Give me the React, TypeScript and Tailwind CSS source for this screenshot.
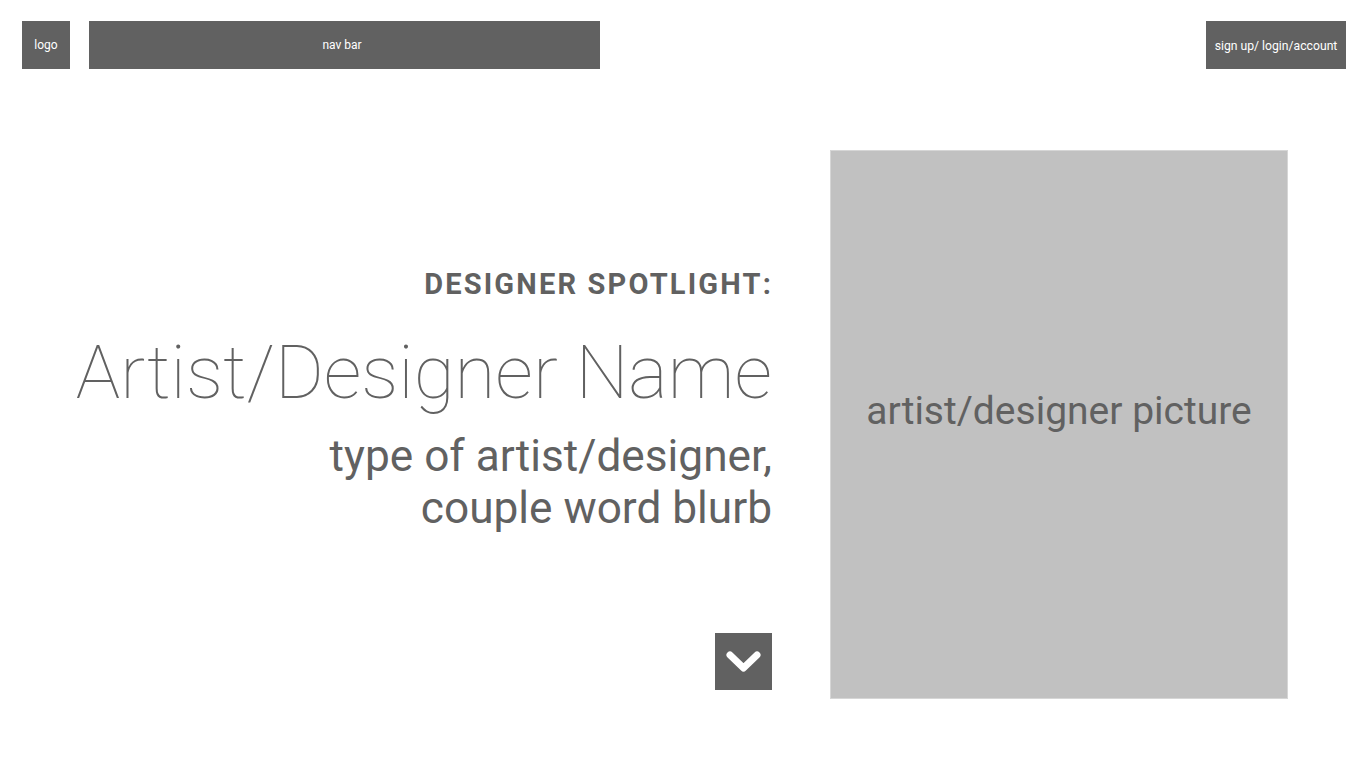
export default function App() {
  return (
    <div className="min-h-[768px] bg-white font-['Roboto',sans-serif] text-[#616161]">
      {/* header */}
      <header className="flex items-start pt-[21px] pl-[22px] pr-[20px]">
        <div className="flex h-12 w-12 items-center justify-center bg-[#616161] text-[12px] text-white">logo</div>
        <div className="ml-[19px] flex h-12 w-[511px] items-center justify-center bg-[#616161] pr-[5px] text-[12px] text-white">
          nav bar
        </div>
        <div className="ml-auto flex h-12 w-[140px] items-center justify-center bg-[#616161] pt-[2px] text-[12.2px] text-white">
          sign up/ login/account
        </div>
      </header>

      {/* spotlight */}
      <main className="mt-[81px] flex">
        <section className="flex w-[772px] flex-col items-end pt-[120px] text-right">
          <h2 className="mr-[-1px] text-[29px] font-bold leading-none tracking-[0.075em]">DESIGNER SPOTLIGHT:</h2>
          <h1 className="mt-[37px] text-[74.5px] font-thin leading-none">Artist/Designer Name</h1>
          <p className="mt-[19px] text-[44.2px] leading-[52px]">
            type of artist/designer,
            <br />
            couple word blurb
          </p>
          <button className="mt-[99px] h-[57px] w-[57px] bg-[#616161]">
            <svg width="57" height="57" viewBox="0 0 57 57" fill="none">
              <path d="M15 22 L28.5 35 L42 22" stroke="white" strokeWidth="7" strokeLinecap="round" strokeLinejoin="round" />
            </svg>
          </button>
        </section>

        <div className="ml-[58px] flex h-[549px] w-[458px] items-center justify-center border border-[#d6d6d6] bg-[#c1c1c1] pb-[27px]">
          <span className="text-[39px] leading-none">artist/designer picture</span>
        </div>
      </main>
    </div>
  );
}
